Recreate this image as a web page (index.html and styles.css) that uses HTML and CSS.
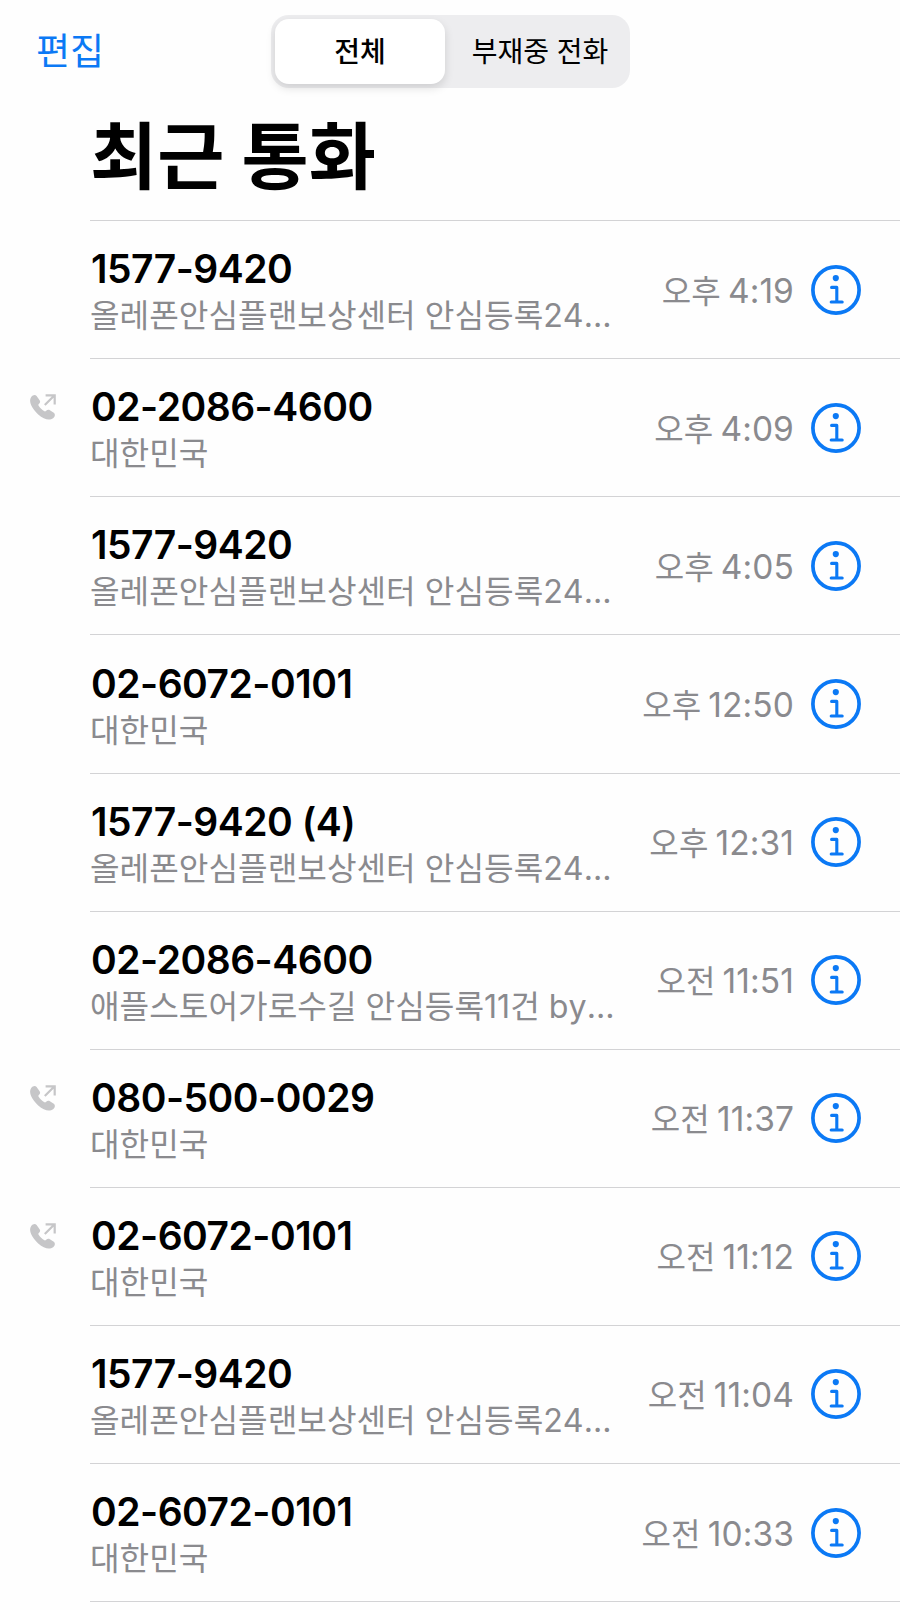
FILE: index.html
```html
<!DOCTYPE html>
<html lang="ko">
<head>
  <meta charset="UTF-8">
  <meta name="viewport" content="width=device-width, initial-scale=1">
  <title>최근 통화</title>
  <link rel="stylesheet" href="styles.css">
</head>
<body>

  <header class="top-bar">
    <a class="edit">편집</a>
    <div class="segment">
      <div class="segment-item active">전체</div>
      <div class="segment-item">부재중 전화</div>
    </div>
  </header>

  <h1>최근 통화</h1>

  <ul class="call-list" id="call-list">
    <!-- JS로 생성 -->
  </ul>

  <script>
    const center = "올레폰안심플랜보상센터 안심등록24…";
    const calls = [
      { number: "1577-9420", label: center, ampm: "오후", time: "4:19" },
      { number: "02-2086-4600", label: "대한민국", ampm: "오후", time: "4:09", outgoing: true },
      { number: "1577-9420", label: center, ampm: "오후", time: "4:05" },
      { number: "02-6072-0101", label: "대한민국", ampm: "오후", time: "12:50" },
      { number: "1577-9420 (4)", label: center, ampm: "오후", time: "12:31" },
      { number: "02-2086-4600", label: "애플스토어가로수길 안심등록11건 by…", ampm: "오전", time: "11:51" },
      { number: "080-500-0029", label: "대한민국", ampm: "오전", time: "11:37", outgoing: true },
      { number: "02-6072-0101", label: "대한민국", ampm: "오전", time: "11:12", outgoing: true },
      { number: "1577-9420", label: center, ampm: "오전", time: "11:04" },
      { number: "02-6072-0101", label: "대한민국", ampm: "오전", time: "10:33" }
    ];

    const outgoingIcon = `
      <svg class="outgoing" viewBox="0 0 26 26">
        <path class="handset" d="M1.2 3C3 .8 5.2 .4 6.6 2L9.6 6.2C10.6 7.6 10 8.8 9 9.8C8.3 10.5 8.2 11 8.8 11.9C10.2 13.9 12 15.7 14 17C14.9 17.6 15.4 17.5 16.2 16.7C17.4 15.6 18.6 15.4 19.9 16.2L23.8 18.8C25.6 20.2 25 22.6 23.1 24.2C19.5 27 14 25.6 8.2 20.5C2.2 15-2 7.2 1.2 3Z"/>
        <path class="arrow" d="M14.8 11L24.3 1.5M15.6 1.3H24.7V10.4"/>
      </svg>`;

    const infoIcon = `
      <svg class="info" viewBox="0 0 50 50">
        <circle class="ring" cx="25" cy="25" r="23.1"/>
        <circle class="dot" cx="24.8" cy="13.1" r="3.1"/>
        <path class="stem" d="M20.6 22.4H25.8V37M20.2 37H31.2"/>
      </svg>`;

    document.getElementById("call-list").innerHTML = calls.map(c => `
      <li class="call">
        <div class="status">${c.outgoing ? outgoingIcon : ""}</div>
        <div class="body">
          <div class="text">
            <div class="number">${c.number}</div>
            <div class="label">${c.label}</div>
          </div>
          <div class="time"><span class="ampm">${c.ampm}</span> ${c.time}</div>
          ${infoIcon}
        </div>
      </li>`).join("");
  </script>

</body>
</html>
```

FILE: styles.css
```css
* {
  box-sizing: border-box;
}

body {
  margin: 0;
  background: #fefefe;
  color: #000;
  font-family: Inter, "Noto Sans CJK KR", sans-serif;
}

.top-bar {
  display: grid;
  grid-template-columns: 271px 359px;
  align-items: center;
  height: 88px;
  padding-top: 15px;
}

.edit {
  padding-left: 36px;
  font-size: 37px;
  line-height: 71px;
  color: #0b79f5;
}

.segment {
  display: flex;
  height: 73px;
  padding: 4px;
  border-radius: 18px;
  background: #ededef;
}

.segment-item {
  flex: 1;
  padding-left: 9px;
  line-height: 67px;
  font-size: 28px;
  text-align: center;
}

.segment-item.active {
  flex: 0 0 170px;
  height: 65px;
  padding-left: 0;
  border-radius: 14px;
  background: #fff;
  font-weight: 500;
  box-shadow: 0 4px 10px rgba(0, 0, 0, 0.13);
}

h1 {
  height: 132.2px;
  margin: 0;
  padding-left: 90px;
  font-size: 73px;
  line-height: 137px;
  font-weight: 700;
}

.call-list {
  margin: 0;
  padding: 0;
  list-style: none;
}

.call {
  display: flex;
  height: 138.1px;
}

.call:last-child {
  height: 139.1px;
}

.call:last-child .body {
  border-bottom: 1px solid #d3d3d5;
}

.status {
  width: 90px;
  padding: 36px 0 0 30px;
}

.outgoing {
  display: block;
  width: 26px;
  height: 26px;
}

.handset {
  fill: #c6c6c8;
}

.arrow {
  fill: none;
  stroke: #c6c6c8;
  stroke-width: 2.2;
}

.body {
  flex: 1;
  display: flex;
  align-items: center;
  padding-right: 39px;
  border-top: 1px solid #d3d3d5;
}

.text {
  flex: 1;
  padding-top: 6px;
  white-space: nowrap;
}

.number {
  padding-left: 1px;
  font-size: 39px;
  line-height: 47px;
  font-weight: 600;
  letter-spacing: -0.5px;
}

.label {
  font-size: 32.2px;
  line-height: 48px;
  font-kerning: none;
  color: #8a8a8e;
}

.time {
  margin-right: 17px;
  padding-bottom: 2px;
  font-size: 33.5px;
  font-kerning: none;
  letter-spacing: 0.1px;
  word-spacing: -2.5px;
  white-space: nowrap;
  color: #8a8a8e;
}

.ampm {
  font-size: 32px;
}

.info {
  width: 50px;
  height: 50px;
}

.ring,
.stem {
  fill: none;
  stroke: #0b79f5;
}

.ring {
  stroke-width: 3.7;
}

.stem {
  stroke-width: 3.1;
  stroke-linecap: round;
  stroke-linejoin: round;
}

.dot {
  fill: #0b79f5;
}
```
